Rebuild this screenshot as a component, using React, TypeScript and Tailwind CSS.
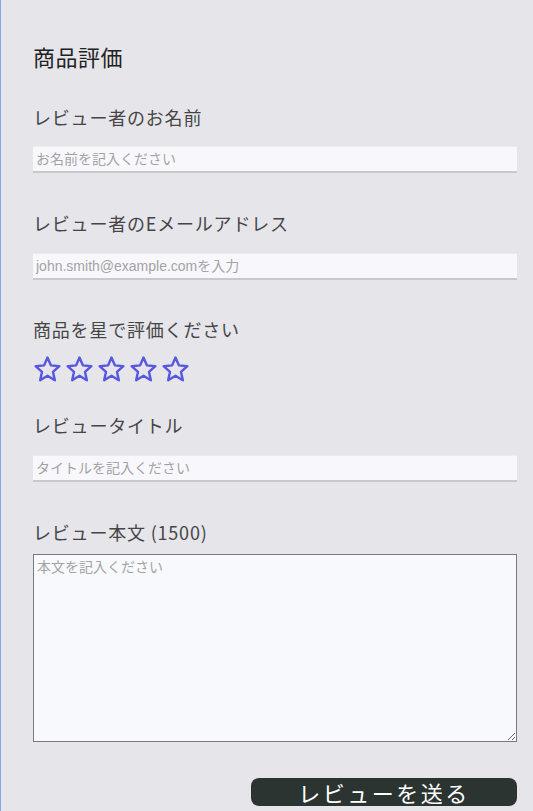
import React from "react";

const font = { fontFamily: '"Liberation Sans", "Noto Sans CJK JP", sans-serif' };

function Star() {
  return (
    <svg width="29" height="28" viewBox="0 0 24 24" fill="none" stroke="#5757e0" strokeWidth="2.1" strokeLinejoin="round">
      <polygon points="12,2.2 14.9,8.9 22.2,9.6 16.7,14.4 18.3,21.6 12,17.8 5.7,21.6 7.3,14.4 1.8,9.6 9.1,8.9" />
    </svg>
  );
}

export default function App() {
  return (
    <div
      className="min-h-[811px] w-[533px] bg-[#e6e5ea] border-l border-[#7fa9e6] pl-[32px] pr-[16px] flex flex-col text-[#454547]"
      style={{ fontFamily: '"Noto Sans CJK JP", "Liberation Sans", sans-serif' }}
    >
      <h1 className="mt-[41px] text-[22px] leading-[30px] font-normal text-[#222] tracking-[0.5px]">商品評価</h1>

      <label className="mt-[33px] text-[18px] leading-[26px] tracking-[0.8px]">レビュー者のお名前</label>
      <input
        className="mt-[16px] h-[27px] w-full bg-[#f8f8fc] border-t border-t-[#ebebef] border-b-2 border-b-[#c9c9cc] px-[3px] text-[14px] placeholder:text-[#a3a3a6] outline-none"
        style={font}
        placeholder="お名前を記入ください"
      />

      <label className="mt-[37px] text-[18px] leading-[26px] tracking-[0.8px]">レビュー者のEメールアドレス</label>
      <input
        className="mt-[17px] h-[27px] w-full bg-[#f8f8fc] border-t border-t-[#ebebef] border-b-2 border-b-[#c9c9cc] px-[3px] text-[14px] placeholder:text-[#a3a3a6] outline-none"
        style={font}
        placeholder="john.smith@example.comを入力"
      />

      <label className="mt-[36px] text-[18px] leading-[26px] tracking-[0.8px]">商品を星で評価ください</label>
      <div className="mt-[13px] flex gap-[3px] h-[28px]">
        <Star />
        <Star />
        <Star />
        <Star />
        <Star />
      </div>

      <label className="mt-[29px] text-[18px] leading-[26px] tracking-[0.8px]">レビュータイトル</label>
      <input
        className="mt-[17px] h-[27px] w-full bg-[#f8f8fc] border-t border-t-[#ebebef] border-b-2 border-b-[#c9c9cc] px-[3px] text-[14px] placeholder:text-[#a3a3a6] outline-none"
        style={font}
        placeholder="タイトルを記入ください"
      />

      <label className="mt-[37px] text-[18px] leading-[26px] tracking-[0.8px]">レビュー本文 (1500)</label>
      <textarea
        className="mt-[9px] h-[188px] w-full bg-[#f8f9fd] border border-[#7a7a7e] px-[3px] py-[2px] text-[14px] placeholder:text-[#a3a3a6] outline-none"
        style={font}
        placeholder="本文を記入ください"
      />

      <div className="mt-[36px] flex justify-end">
        <button className="w-[266px] h-[28px] rounded-[8px] bg-[#2c3432] text-white text-[22px] leading-[28px] tracking-[2.5px] flex items-center justify-center">
          レビューを送る
        </button>
      </div>
    </div>
  );
}
